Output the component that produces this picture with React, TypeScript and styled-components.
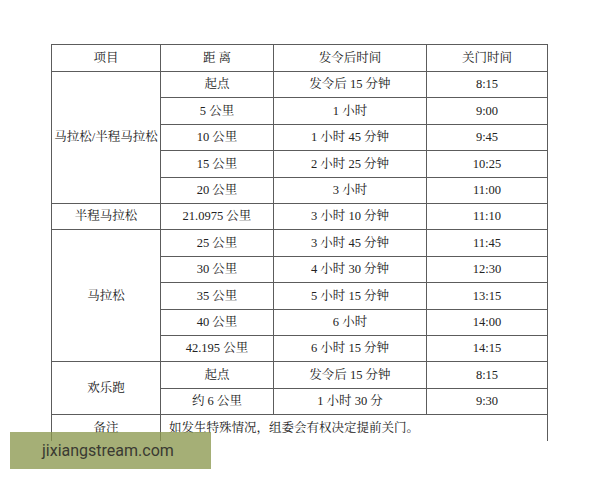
import React from "react";
import styled, { createGlobalStyle } from "styled-components";

const Global = createGlobalStyle`
  html, body { margin: 0; padding: 0; background: #fff; }
  body { width: 600px; height: 480px; overflow: hidden; }
`;

const Page = styled.div`
  position: relative;
  width: 600px;
  height: 480px;
  box-sizing: border-box;
  padding: 44px 0 0 51px;
  background: #fff;
`;

const Table = styled.table`
  border-collapse: collapse;
  table-layout: fixed;
  width: 496px;
  font-family: "Liberation Serif", "Noto Serif CJK SC", "Noto Sans CJK SC", serif;
  font-size: 12.5px;
  color: #222;
`;

const Row = styled.tr<{ $h?: number }>`
  height: ${(p) => p.$h ?? 26.4}px;
`;

const Cell = styled.td<{ $left?: boolean; $open?: boolean }>`
  border: 1.5px solid #5c5c5c;
  ${(p) => (p.$open ? "border-bottom: none;" : "")}
  text-align: ${(p) => (p.$left ? "left" : "center")};
  padding: 0 ${(p) => (p.$left ? "8px" : "0")};
  vertical-align: middle;
  line-height: 1;
  white-space: nowrap;
`;

const Watermark = styled.div`
  position: absolute;
  left: 10px;
  top: 432px;
  width: 201px;
  height: 37px;
  background: rgba(140, 152, 80, 0.78);
  color: #3a3a32;
  font-family: Roboto, "Liberation Sans", sans-serif;
  font-size: 16px;
  display: flex;
  align-items: center;
  padding-left: 32px;
  box-sizing: border-box;
`;

type R = [string, string, string];

const groups: { name: string; rows: R[] }[] = [
  {
    name: "马拉松/半程马拉松",
    rows: [
      ["起点", "发令后 15 分钟", "8:15"],
      ["5 公里", "1 小时", "9:00"],
      ["10 公里", "1 小时 45 分钟", "9:45"],
      ["15 公里", "2 小时 25 分钟", "10:25"],
      ["20 公里", "3 小时", "11:00"],
    ],
  },
  { name: "半程马拉松", rows: [["21.0975 公里", "3 小时 10 分钟", "11:10"]] },
  {
    name: "马拉松",
    rows: [
      ["25 公里", "3 小时 45 分钟", "11:45"],
      ["30 公里", "4 小时 30 分钟", "12:30"],
      ["35 公里", "5 小时 15 分钟", "13:15"],
      ["40 公里", "6 小时", "14:00"],
      ["42.195 公里", "6 小时 15 分钟", "14:15"],
    ],
  },
  {
    name: "欢乐跑",
    rows: [
      ["起点", "发令后 15 分钟", "8:15"],
      ["约 6 公里", "1 小时 30 分", "9:30"],
    ],
  },
];

export default function App() {
  return (
    <Page>
      <Global />
      <Table>
        <colgroup>
          <col style={{ width: 109 }} />
          <col style={{ width: 113 }} />
          <col style={{ width: 153 }} />
          <col style={{ width: 121 }} />
        </colgroup>
        <tbody>
          <Row $h={27}>
            <Cell>项目</Cell>
            <Cell>距 离</Cell>
            <Cell>发令后时间</Cell>
            <Cell>关门时间</Cell>
          </Row>
          {groups.map((g) =>
            g.rows.map((r, i) => (
              <Row key={g.name + i}>
                {i === 0 && <Cell rowSpan={g.rows.length}>{g.name}</Cell>}
                <Cell>{r[0]}</Cell>
                <Cell>{r[1]}</Cell>
                <Cell>{r[2]}</Cell>
              </Row>
            ))
          )}
          <Row $h={26}>
            <Cell $open>备注</Cell>
            <Cell $open $left colSpan={3}>
              如发生特殊情况，组委会有权决定提前关门。
            </Cell>
          </Row>
        </tbody>
      </Table>
      <Watermark>jixiangstream.com</Watermark>
    </Page>
  );
}
